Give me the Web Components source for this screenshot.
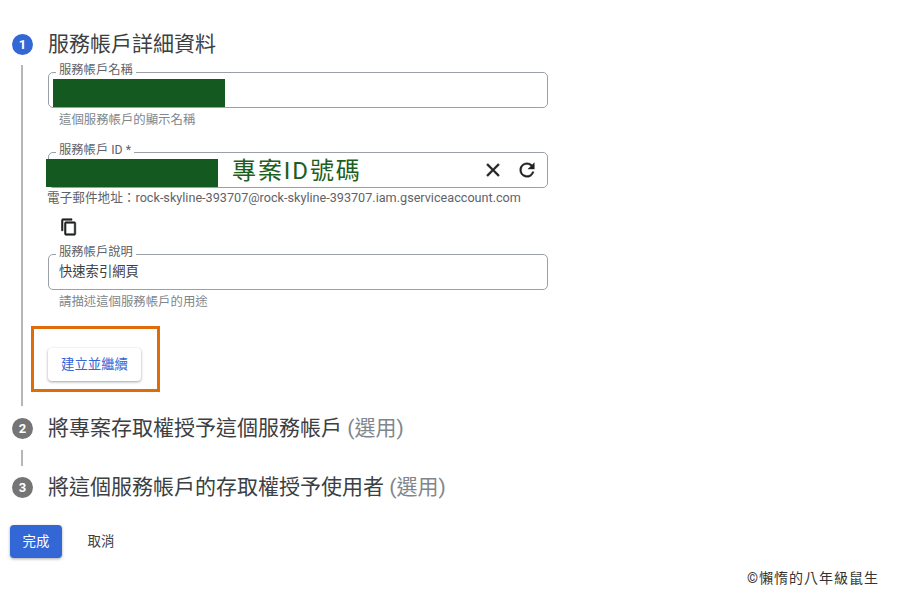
<!DOCTYPE html>
<html lang="zh-Hant">
<head>
<meta charset="utf-8">
<title>服務帳戶詳細資料</title>
<style>
	html, body { margin: 0; background: #fff; }
	body {
		width: 900px;
		height: 600px;
		overflow: hidden;
		font-family: Roboto, "Noto Sans CJK TC", sans-serif;
		color: #3c4043;
	}
</style>
</head>
<body>
<service-account-page></service-account-page>
<script>
// step-header.js
class StepHeader extends HTMLElement {
	constructor() {
		super();
		this.attachShadow({ mode: "open" });
		this.shadowRoot.innerHTML = `
      <style>
        :host {
          display: flex;
          align-items: center;
          height: 22px;
          padding-left: 12px;
          font-size: 21px;
          color: #3c4043;
        }
        .num {
          width: 21px;
          height: 21px;
          flex: none;
          margin-right: 15px;
          border-radius: 50%;
          background: #757575;
          color: #fff;
          font-size: 13px;
          font-weight: 700;
          line-height: 21px;
          text-align: center;
        }
        :host([active]) .num { background: #3367d6; }
        .title { white-space: nowrap; line-height: 22px; }
        ::slotted(span) { color: #80868b; }
      </style>
      <div class="num"></div>
      <div class="title"><slot></slot></div>
    `;
	}
	connectedCallback() {
		this.shadowRoot.querySelector(".num").textContent = this.getAttribute("num");
	}
}
customElements.define("step-header", StepHeader);

// outlined-field.js
class OutlinedField extends HTMLElement {
	constructor() {
		super();
		this.attachShadow({ mode: "open" });
		this.shadowRoot.innerHTML = `
      <style>
        :host { display: block; width: 500px; margin-left: 1px; }
        .box {
          position: relative;
          box-sizing: border-box;
          display: flex;
          align-items: center;
          height: 36px;
          padding-left: 10px;
          border: 1px solid #9aa0a6;
          border-radius: 5px;
        }
        .label {
          position: absolute;
          top: -10px;
          left: 7px;
          padding: 0 3px;
          background: #fff;
          font-size: 12.3px;
          line-height: 15px;
          color: #5f6368;
          white-space: nowrap;
        }
        .hint {
          margin-top: 5px;
          padding-left: 11px;
          font-size: 12.4px;
          line-height: 14px;
          color: #80868b;
        }
        .hint:empty { display: none; }
      </style>
      <div class="box">
        <div class="label"></div>
        <slot></slot>
      </div>
      <div class="hint"></div>
    `;
	}
	connectedCallback() {
		this.shadowRoot.querySelector(".label").textContent = this.getAttribute("label");
		this.shadowRoot.querySelector(".hint").textContent = this.getAttribute("hint") || "";
	}
}
customElements.define("outlined-field", OutlinedField);

// redact-block.js
class RedactBlock extends HTMLElement {
	constructor() {
		super();
		this.attachShadow({ mode: "open" });
		this.shadowRoot.innerHTML = `
      <style>
        :host {
          display: block;
          flex: none;
          width: 172px;
          height: 28px;
          background: #145a20;
        }
      </style>
    `;
	}
}
customElements.define("redact-block", RedactBlock);

// md-button.js
class MdButton extends HTMLElement {
	constructor() {
		super();
		this.attachShadow({ mode: "open" });
		this.shadowRoot.innerHTML = `
      <style>
        :host {
          display: inline-flex;
          align-items: center;
          justify-content: center;
          height: 33px;
          padding-bottom: 3px;
          border-radius: 4px;
          font-size: 13.4px;
          white-space: nowrap;
          box-sizing: border-box;
          cursor: pointer;
        }
        :host([variant="raised"]) {
          width: 93px;
          color: #3367d6;
          background: #fff;
          box-shadow: 0 1px 3px rgba(60,64,67,0.4), 0 1px 2px rgba(60,64,67,0.1);
        }
        :host([variant="primary"]) {
          width: 52px;
          color: #fff;
          background: #3367d6;
          box-shadow: 0 1px 3px rgba(60,64,67,0.45);
        }
        :host([variant="text"]) {
          width: 52px;
          color: #3c4043;
        }
      </style>
      <slot></slot>
    `;
	}
}
customElements.define("md-button", MdButton);

// service-account-page.js
class ServiceAccountPage extends HTMLElement {
	constructor() {
		super();
		this.attachShadow({ mode: "open" });
		this.shadowRoot.innerHTML = `
      <style>
        :host {
          display: block;
          padding-top: 33px;
          font-family: Roboto, "Noto Sans CJK TC", sans-serif;
        }
        .rail {
          box-sizing: border-box;
          height: 341px;
          margin: 10px 0 11px 21px;
          padding: 7px 0 0 24px;
          border-left: 2px solid #b4b6b9;
        }
        .mid {
          width: 2px;
          height: 16px;
          margin: 11px 0 10px 21px;
          background: #b4b6b9;
        }
        .first { margin-bottom: 25px; }
        #f1 redact-block { margin: 6px 0 0 -6px; }
        #f2 redact-block { margin: 6px 0 0 -13px; }
        .project {
          margin: 2px 0 0 14px;
          font-size: 24px;
          line-height: 28px;
          letter-spacing: 1.9px;
          color: #1b5e20;
          white-space: nowrap;
        }
        .actions {
          display: flex;
          align-items: center;
          gap: 12px;
          margin-left: auto;
          padding-right: 9px;
        }
        .actions svg { display: block; }
        .email {
          margin-top: 2px;
          font-size: 12.65px;
          line-height: 16px;
          color: #5f6368;
          white-space: nowrap;
        }
        .copy { display: block; margin: 12px 0 0 13px; }
        .value { padding-bottom: 3px; font-size: 13.3px; color: #3c4043; }
        #f3 { margin-top: 18px; }
        .mark {
          box-sizing: border-box;
          width: 129px;
          height: 66px;
          margin: 17px 0 0 -16px;
          padding: 19px 0 0 14px;
          border: 3px solid #df6c0b;
        }
        .footer-btns {
          display: flex;
          margin: 27px 0 0 10px;
        }
        .footer-btns md-button + md-button { margin-left: 13px; }
        .credit {
          margin-top: 13px;
          padding-right: 21px;
          font-size: 14px;
          line-height: 14px;
          letter-spacing: 1px;
          color: #333;
          text-align: right;
        }
      </style>
      <step-header num="1" active>服務帳戶詳細資料</step-header>
      <div class="rail">
        <outlined-field id="f1" class="first" label="服務帳戶名稱" hint="這個服務帳戶的顯示名稱">
          <redact-block></redact-block>
        </outlined-field>
        <outlined-field id="f2" label="服務帳戶 ID *">
          <redact-block></redact-block>
          <div class="project">專案ID號碼</div>
          <div class="actions">
            <svg width="22" height="22" viewBox="0 0 24 24" fill="#202124" stroke="#202124" stroke-width=".6"><path d="M19 6.41 17.59 5 12 10.59 6.41 5 5 6.41 10.59 12 5 17.59 6.41 19 12 13.41 17.59 19 19 17.59 13.41 12z"/></svg>
            <svg width="22" height="22" viewBox="0 0 24 24" fill="#202124" stroke="#202124" stroke-width=".4"><path d="M17.65 6.35A7.96 7.96 0 0 0 12 4a8 8 0 1 0 7.73 10h-2.08A6 6 0 1 1 12 6c1.66 0 3.14.69 4.22 1.78L13 11h7V4l-2.35 2.35z"/></svg>
          </div>
        </outlined-field>
        <div class="email">電子郵件地址：rock-skyline-393707@rock-skyline-393707.iam.gserviceaccount.com</div>
        <svg class="copy" width="18" height="18" viewBox="0 0 24 24" fill="#202124" stroke="#202124" stroke-width=".8"><path d="M16 1H4c-1.1 0-2 .9-2 2v14h2V3h12V1zm3 4H8c-1.1 0-2 .9-2 2v14c0 1.1.9 2 2 2h11c1.1 0 2-.9 2-2V7c0-1.1-.9-2-2-2zm0 16H8V7h11v14z"/></svg>
        <outlined-field id="f3" label="服務帳戶說明" hint="請描述這個服務帳戶的用途">
          <div class="value">快速索引網頁</div>
        </outlined-field>
        <div class="mark"><md-button variant="raised">建立並繼續</md-button></div>
      </div>
      <step-header num="2">將專案存取權授予這個服務帳戶 <span>(選用)</span></step-header>
      <div class="mid"></div>
      <step-header num="3">將這個服務帳戶的存取權授予使用者 <span>(選用)</span></step-header>
      <div class="footer-btns">
        <md-button variant="primary">完成</md-button>
        <md-button variant="text">取消</md-button>
      </div>
      <div class="credit">©懶惰的八年級鼠生</div>
    `;
	}
}
customElements.define("service-account-page", ServiceAccountPage);
</script>
</body>
</html>
